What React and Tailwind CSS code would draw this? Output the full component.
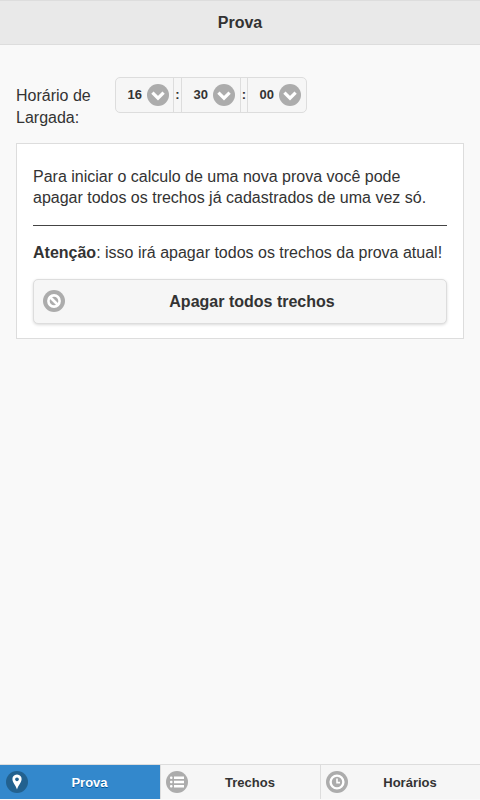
const IconDisc = ({ children, dark }) => (
  <span className={`flex h-[22px] w-[22px] shrink-0 items-center justify-center rounded-full text-white ${dark ? "bg-[#22618f]" : "bg-[#acacac]"}`}>
    {children}
  </span>
);

const ChevronIcon = () => (
  <svg width="16" height="16" viewBox="0 0 16 16" fill="none" stroke="currentColor" strokeWidth="3.2">
    <path d="M2.4 5.6 L8 11.2 L13.6 5.6" />
  </svg>
);

const BanIcon = () => (
  <svg width="14" height="14" viewBox="0 0 14 14" fill="none" stroke="currentColor" strokeWidth="2.6">
    <circle cx="7" cy="7" r="5.6" />
    <path d="M3 3 L11 11" />
  </svg>
);

const PinIcon = () => (
  <svg width="14" height="16" viewBox="0 0 14 16">
    <path
      fill="currentColor"
      fillRule="evenodd"
      d="M7 0.5 C3.9 0.5 2.4 2.7 2.4 5.1 C2.4 8.2 5.8 11.6 7 15.5 C8.2 11.6 11.6 8.2 11.6 5.1 C11.6 2.7 10.1 0.5 7 0.5 Z M7 3.4 C8.1 3.4 8.9 4.2 8.9 5.3 C8.9 6.4 8.1 7.2 7 7.2 C5.9 7.2 5.1 6.4 5.1 5.3 C5.1 4.2 5.9 3.4 7 3.4 Z"
    />
  </svg>
);

const ListIcon = () => (
  <svg width="14" height="14" viewBox="0 0 14 14" fill="currentColor">
    <rect x="0" y="1.5" width="2.5" height="2.5" rx="1" />
    <rect x="4" y="1.5" width="10" height="2.5" />
    <rect x="0" y="5.75" width="2.5" height="2.5" rx="1" />
    <rect x="4" y="5.75" width="10" height="2.5" />
    <rect x="0" y="10" width="2.5" height="2.5" rx="1" />
    <rect x="4" y="10" width="10" height="2.5" />
  </svg>
);

const ClockIcon = () => (
  <svg width="16" height="16" viewBox="0 0 16 16" fill="none" stroke="currentColor" strokeWidth="2.4">
    <circle cx="8" cy="8" r="6.4" />
    <path d="M8 4.5 V8.6 H11" strokeWidth="1.6" />
  </svg>
);

const TimeField = ({ value, className }) => (
  <div className={`flex items-center justify-end gap-[5px] ${className}`}>
    <span className="text-[13px] font-bold">{value}</span>
    <IconDisc>
      <ChevronIcon />
    </IconDisc>
  </div>
);

const Colon = ({ className }) => (
  <div className={`flex items-center justify-center border-r border-[#dddddd] text-[13px] font-bold ${className}`}>:</div>
);

const Tab = ({ label, icon, active }) => (
  <div
    className={`relative flex h-[34px] w-[160px] items-center justify-center pt-[1px] text-[13px] font-bold ${
      active
        ? "bg-[#3388cc] text-white [text-shadow:0_1px_0_#005599]"
        : "border-l border-[#dddddd] bg-[#f6f6f6] text-[#333333] [text-shadow:0_1px_0_#f3f3f3]"
    }`}
  >
    <span className={`absolute top-[6px] ${active ? "left-[6px]" : "left-[5px]"}`}>
      <IconDisc dark={active}>{icon}</IconDisc>
    </span>
    <span className="pl-[19px]">{label}</span>
  </div>
);

export default function App() {
  return (
    <div className="flex h-[800px] flex-col overflow-hidden bg-[#f9f9f9] font-['Liberation_Sans',Arial,sans-serif] text-[#333333]">
      {/* Header */}
      <header className="flex h-[45px] shrink-0 items-center justify-center border-y border-[#dddddd] bg-[#e9e9e9] text-[16px] font-bold [text-shadow:0_1px_0_#eeeeee]">
        Prova
      </header>

      <main className="flex-1 px-4 pt-[32px]">
        <div className="flex items-start">
          <label className="w-[99px] pt-[8px] text-[16px] leading-[22px]">Horário de Largada:</label>
          <div className="flex h-[36px] w-[192px] rounded-[5px] border border-[#dddddd] bg-[#f6f6f6]">
            <TimeField value="16" className="w-[58px] border-r border-[#dddddd] pr-[4px]" />
            <Colon className="w-[8px]" />
            <TimeField value="30" className="w-[59px] border-r border-[#dddddd] pr-[5px]" />
            <Colon className="w-[7px]" />
            <TimeField value="00" className="w-[58px] pr-[5px]" />
          </div>
        </div>

        {/* Card */}
        <section className="mt-[14px] h-[196px] border border-[#dddddd] bg-white px-4 pt-[22px] text-[16px] leading-[21px]">
          <p>Para iniciar o calculo de uma nova prova você pode apagar todos os trechos já cadastrados de uma vez só.</p>
          <hr className="mt-[17px] border-t border-[#444444]" />
          <p className="mt-[16px] whitespace-nowrap">
            <strong>Atenção</strong>: isso irá apagar todos os trechos da prova atual!
          </p>
          <button className="relative mt-[16px] flex h-[45px] w-full items-center justify-center rounded-[5px] border border-[#dddddd] bg-[#f6f6f6] font-bold shadow-[0_1px_3px_rgba(0,0,0,0.15)] [text-shadow:0_1px_0_#f3f3f3]">
            <span className="absolute left-[9px] top-[10px]">
              <IconDisc>
                <BanIcon />
              </IconDisc>
            </span>
            <span className="pl-[24px]">Apagar todos trechos</span>
          </button>
        </section>
      </main>

      {/* Footer nav */}
      <nav className="mb-[1px] flex shrink-0 border-t border-[#dddddd]">
        <Tab label="Prova" active icon={<PinIcon />} />
        <Tab label="Trechos" icon={<ListIcon />} />
        <Tab label="Horários" icon={<ClockIcon />} />
      </nav>
    </div>
  );
}
